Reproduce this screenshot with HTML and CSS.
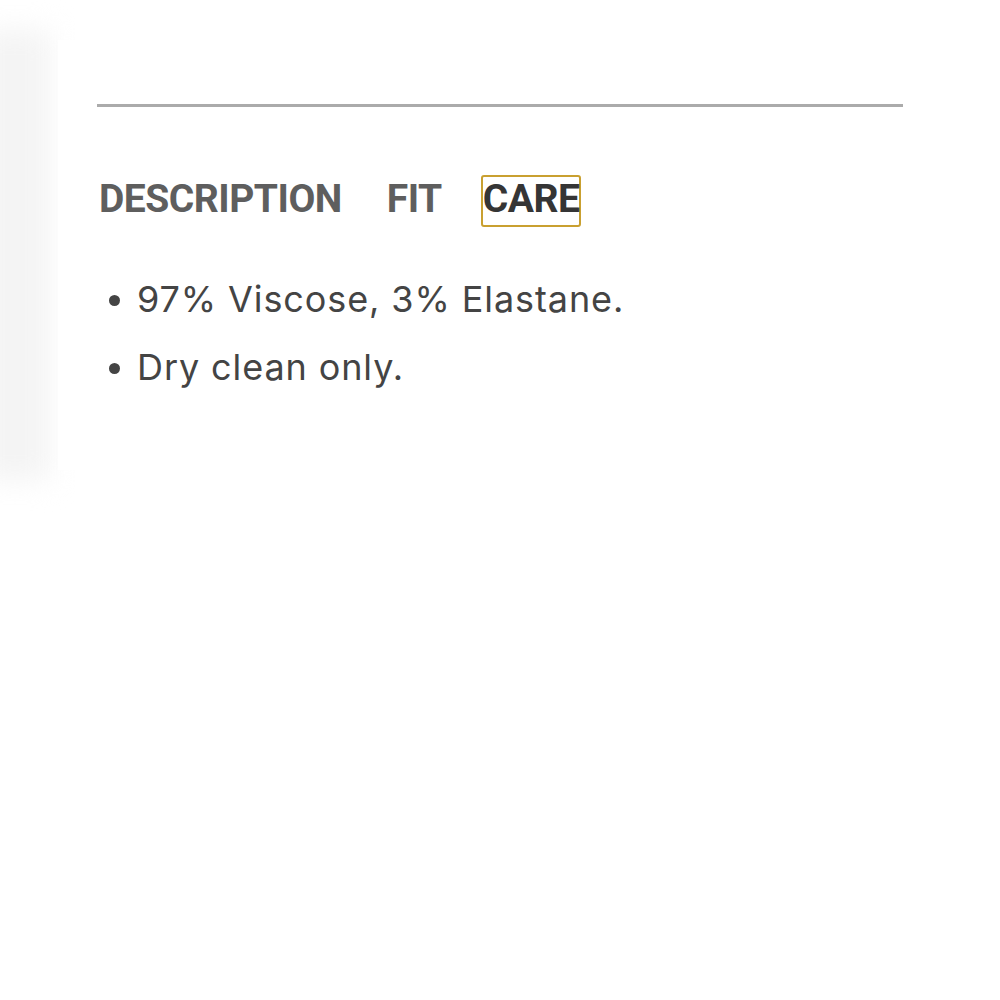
FILE: index.html
```html
<!DOCTYPE html>
<html lang="en">
<head>
	<meta charset="UTF-8">
	<title>Product details - Care</title>
	<link rel="stylesheet" href="styles.css">
</head>
<body>

	<div class="page">
		<div class="detail-panel">

			<hr class="divider">

			<!-- tabs -->
			<div class="tab-list" role="tablist">
				<button type="button" class="tab" role="tab">DESCRIPTION</button>
				<button type="button" class="tab" role="tab">FIT</button>
				<button type="button" class="tab is-active" role="tab" aria-selected="true">CARE</button>
			</div>

			<!-- care -->
			<ul class="tab-body">
				<li>97% Viscose, 3% Elastane.</li>
				<li>Dry clean only.</li>
			</ul>

		</div>
	</div>

</body>
</html>
```

FILE: styles.css
```css
body{
	margin: 0;
	background: #fff;
	font-family: Roboto, "Noto Sans", sans-serif;
	color: #444;
}
ul, li{ margin: 0; padding: 0; list-style: none; }
button{
	background: none;
	border: 0;
	color: inherit;
	font: inherit;
	line-height: normal;
	padding: 0;
	-webkit-appearance: button;
}

.page{
	position: relative;
	height: 1000px;
	padding: 40px 55px 0 58px;
	box-sizing: border-box;
	overflow: hidden;
}
/* soft edge of the sheet behind the panel */
.page:before{
	content: '';
	position: absolute;
	left: -20px;
	top: 30px;
	width: 70px;
	height: 450px;
	background: #f4f4f4;
	filter: blur(14px);
}
.detail-panel{
	position: relative;
	height: 430px;
	padding: 64px 42px 0 39px;
	box-sizing: border-box;
	background: #fff;
}

.divider{
	margin: 0;
	border: 0;
	height: 3px;
	background: #ababab;
}

.tab-list{
	display: flex;
	align-items: center;
	gap: 41px;
	margin-top: 68px;
}
.tab{
	font-size: 39px;
	font-weight: 700;
	color: #5e5e5e;
	letter-spacing: -0.5px;
	line-height: 44px;
	padding-bottom: 4px;
	border: 2px solid transparent;
	border-radius: 3px;
}
.tab.is-active{
	margin-left: -4px;
	color: #353535;
	border-color: #c9a030;
}

.tab-body{
	margin-top: 38px;
	padding-left: 40px;
	font-family: Inter, Roboto, sans-serif;
	font-size: 36px;
	letter-spacing: 0.9px;
	line-height: 68px;
	color: #444;
}
.tab-body li{ position: relative; }
.tab-body li:before{
	content: '';
	position: absolute;
	left: -28px;
	top: 30px;
	width: 11px;
	height: 11px;
	border-radius: 50%;
	background: #444;
}
```
